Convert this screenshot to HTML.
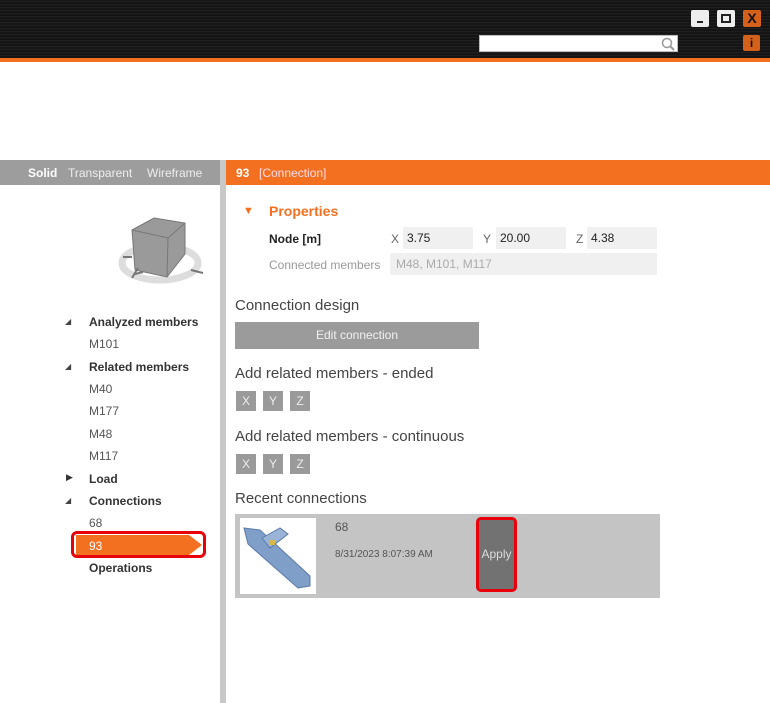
<!DOCTYPE html>
<html><head><meta charset="utf-8"><style>
*{margin:0;padding:0;box-sizing:border-box}
body{width:770px;height:703px;position:relative;overflow:hidden;background:#fff;font-family:"Liberation Sans",sans-serif;color:#333}
.a{position:absolute}
.hdr{left:0;top:0;width:770px;height:58px;background:repeating-linear-gradient(180deg,#111 0,#222 2px,#0a0a0a 3px,#2a2a2a 5px,#000 6px)}
.t{position:absolute;white-space:nowrap}
.xyz{position:absolute;width:20px;height:20px;background:#9a9a9a;color:#eee;font-size:12px;text-align:center;line-height:20px}
.fld{position:absolute;background:#f0f0f0;height:22px;font-size:12px;line-height:22px;padding-left:4px;color:#222}
.tree{font-size:12px;color:#555}
.tb{font-weight:bold;color:#333}
</style></head><body>
<div class="a hdr"></div>
<div class="a" style="left:0;top:58px;width:770px;height:4px;background:#f37021"></div>
<div class="a" style="left:691px;top:10px;width:18px;height:17px;background:#eee;border-radius:2px"><div class="a" style="left:6px;top:11px;width:6px;height:2px;background:#222"></div></div>
<div class="a" style="left:717px;top:10px;width:18px;height:17px;background:#eee;border-radius:2px"><div class="a" style="left:4px;top:4px;width:10px;height:9px;border:2px solid #222"></div></div>
<div class="a" style="left:743px;top:10px;width:18px;height:17px;background:#d5601a;border-radius:2px;color:#111;font-weight:bold;font-size:14px;text-align:center;line-height:17px">X</div>
<div class="a" style="left:743px;top:35px;width:17px;height:16px;background:#d5601a;border-radius:2px;color:#111;font-weight:bold;font-size:12px;text-align:center;line-height:16px">i</div>
<div class="a" style="left:479px;top:35px;width:199px;height:17px;background:#fff;border:1px solid #bbb"><svg class="a" style="left:181px;top:1px" width="14" height="14"><circle cx="6" cy="6" r="4.5" fill="none" stroke="#999" stroke-width="1.5"/><line x1="9" y1="9" x2="13" y2="13" stroke="#999" stroke-width="2"/></svg></div>

<div class="a" style="left:0;top:160px;width:220px;height:25px;background:#9d9d9d"></div>
<div class="t" style="left:28px;top:166px;font-size:12px;color:#fff;font-weight:bold">Solid</div>
<div class="t" style="left:68px;top:166px;font-size:12px;color:#eee">Transparent</div>
<div class="t" style="left:147px;top:166px;font-size:12px;color:#eee">Wireframe</div>
<div class="a" style="left:220px;top:160px;width:6px;height:543px;background:#c8c8c8"></div>
<div class="a" style="left:226px;top:160px;width:544px;height:25px;background:#f37021"></div>
<div class="t" style="left:236px;top:166px;font-size:12px;color:#fff;font-weight:bold">93</div>
<div class="t" style="left:259px;top:166px;font-size:12px;color:#fde">[Connection]</div>

<svg class="a" style="left:115px;top:210px" width="95" height="80">
<ellipse cx="45" cy="53" rx="38" ry="17" fill="none" stroke="#ddd" stroke-width="7"/>
<polygon points="17,20 39,8 70,13 70,44 52,67 20,60" fill="#9a9a9a" stroke="#777"/>
<polyline points="17,20 53,28 70,13" fill="none" stroke="#777"/>
<line x1="53" y1="28" x2="52" y2="67" stroke="#777"/>
<line x1="8" y1="47" x2="17" y2="47" stroke="#777" stroke-width="2"/>
<line x1="76" y1="60" x2="88" y2="63" stroke="#777" stroke-width="2"/>
<path d="M17,68 L23,58 M20,64 L28,62" stroke="#777" stroke-width="2" fill="none"/>
</svg>

<div class="tree">
<div class="t" style="left:65px;top:317px;font-size:8px;color:#444">◢</div>
<div class="t tb" style="left:89px;top:315px">Analyzed members</div>
<div class="t" style="left:89px;top:337px">M101</div>
<div class="t" style="left:65px;top:362px;font-size:8px;color:#444">◢</div>
<div class="t tb" style="left:89px;top:360px">Related members</div>
<div class="t" style="left:89px;top:382px">M40</div>
<div class="t" style="left:89px;top:404px">M177</div>
<div class="t" style="left:89px;top:427px">M48</div>
<div class="t" style="left:89px;top:449px">M117</div>
<div class="t" style="left:66px;top:472px;font-size:9px;color:#333">▶</div>
<div class="t tb" style="left:89px;top:472px">Load</div>
<div class="t" style="left:65px;top:496px;font-size:8px;color:#444">◢</div>
<div class="t tb" style="left:89px;top:494px">Connections</div>
<div class="t" style="left:89px;top:516px">68</div>
<div class="a" style="left:76px;top:535px;width:113px;height:20px;background:#f37021"></div>
<div class="a" style="left:189px;top:535px;width:0;height:0;border-top:10px solid transparent;border-bottom:10px solid transparent;border-left:13px solid #f37021"></div>
<div class="t" style="left:89px;top:539px;color:#fff">93</div>
<div class="a" style="left:71px;top:531px;width:135px;height:27px;border:3px solid #e8000b;border-radius:6px"></div>
<div class="t tb" style="left:89px;top:561px">Operations</div>
</div>

<div class="t" style="left:243px;top:205px;font-size:11px;color:#f37021">▼</div>
<div class="t" style="left:269px;top:203px;font-size:14px;color:#f37021;font-weight:bold">Properties</div>
<div class="t" style="left:269px;top:232px;font-size:12px;font-weight:bold;color:#222">Node [m]</div>
<div class="t" style="left:391px;top:232px;font-size:12px;color:#666">X</div>
<div class="fld" style="left:403px;top:227px;width:70px">3.75</div>
<div class="t" style="left:483px;top:232px;font-size:12px;color:#666">Y</div>
<div class="fld" style="left:496px;top:227px;width:70px">20.00</div>
<div class="t" style="left:576px;top:232px;font-size:12px;color:#666">Z</div>
<div class="fld" style="left:587px;top:227px;width:70px">4.38</div>
<div class="t" style="left:269px;top:258px;font-size:12px;color:#999">Connected members</div>
<div class="fld" style="left:390px;top:253px;width:267px;color:#aaa;padding-left:6px">M48, M101, M117</div>

<div class="t" style="left:235px;top:297px;font-size:15px;color:#444">Connection design</div>
<div class="a" style="left:235px;top:322px;width:244px;height:27px;background:#9b9b9b;color:#f2f2f2;font-size:12px;text-align:center;line-height:27px">Edit connection</div>
<div class="t" style="left:235px;top:365px;font-size:15px;color:#444">Add related members - ended</div>
<div class="xyz" style="left:236px;top:391px">X</div><div class="xyz" style="left:263px;top:391px">Y</div><div class="xyz" style="left:290px;top:391px">Z</div>
<div class="t" style="left:235px;top:428px;font-size:15px;color:#444">Add related members - continuous</div>
<div class="xyz" style="left:236px;top:454px">X</div><div class="xyz" style="left:263px;top:454px">Y</div><div class="xyz" style="left:290px;top:454px">Z</div>
<div class="t" style="left:235px;top:490px;font-size:15px;color:#444">Recent connections</div>
<div class="a" style="left:235px;top:514px;width:425px;height:84px;background:#c4c4c4"></div>
<div class="a" style="left:240px;top:518px;width:76px;height:76px;background:#fff">
<svg width="76" height="76"><polygon points="4,10 20,12 70,58 70,68 58,70 8,26" fill="#7f9fc8" stroke="#5a7aa8"/><polygon points="22,20 40,10 48,16 30,30" fill="#9ab4d8" stroke="#5a7aa8"/><rect x="30" y="22" width="5" height="5" fill="#d9b84a"/></svg></div>
<div class="t" style="left:335px;top:520px;font-size:12px;color:#555">68</div>
<div class="t" style="left:335px;top:549px;font-size:10px;color:#555">8/31/2023 8:07:39 AM</div>
<div class="a" style="left:476px;top:517px;width:41px;height:75px;background:#727272;border:3px solid #e8000b;border-radius:5px;color:#ddd;font-size:12px;text-align:center;line-height:69px">Apply</div>
</body></html>
